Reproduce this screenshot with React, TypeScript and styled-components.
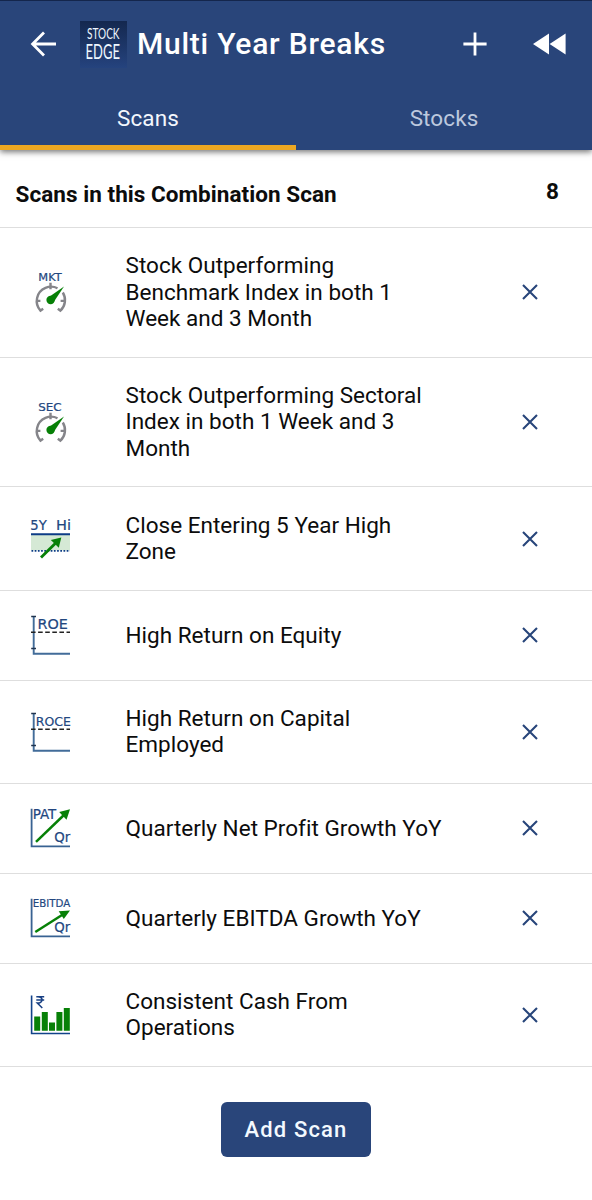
import React from "react";
import styled, { createGlobalStyle } from "styled-components";

const Global = createGlobalStyle`
  * { box-sizing: border-box; }
  body { margin: 0; background: #fff; font-family: Roboto, "Liberation Sans", sans-serif; color: #0c0c0c; }
  svg { display: block; }
`;

const NAVY = "#29457a";
const INK = "#23477f";
const GREEN = "#078007";

const Screen = styled.main`
  width: 592px;
  min-height: 1200px;
  background: #fff;
`;

const Header = styled.header`
  height: 150px;
  background: ${NAVY};
  border-top: 1px solid #14264c;
  box-shadow: 0 2px 6px rgba(0, 0, 0, 0.55);
  color: #fff;
`;

const Toolbar = styled.div`
  height: 85px;
  display: flex;
  align-items: center;
  padding: 0 26px 0 30px;
`;

const IconButton = styled.button<{ $gap?: number }>`
  border: 0;
  padding: 0;
  margin: 0 0 0 ${(p) => p.$gap ?? 0}px;
  background: none;
  color: inherit;
`;

const Logo = styled.div`
  width: 47px;
  height: 47px;
  margin: 2px 10px 0 23px;
  background: linear-gradient(#14284f, #25437e);
`;

const Title = styled.h1`
  flex: 1;
  margin: 0;
  font-size: 30px;
  font-weight: 500;
  letter-spacing: 0.76px;
  white-space: nowrap;
`;

const Tabs = styled.nav`
  display: grid;
  grid-template-columns: 1fr 1fr;
  height: 64px;
`;

const Tab = styled.button<{ $active?: boolean }>`
  border: 0;
  border-bottom: 5px solid ${(p) => (p.$active ? "#eca722" : "transparent")};
  padding: 4px 0 0;
  background: none;
  font: 400 22.5px Roboto, sans-serif;
  letter-spacing: 0.1px;
  color: ${(p) => (p.$active ? "#f3f7fd" : "#bdc9de")};
`;

const SectionHead = styled.div`
  display: flex;
  justify-content: space-between;
  height: 77.9px;
  padding: 31px 33px 0 15.5px;
  border-bottom: 1.3px solid #dedede;
  font-size: 22.5px;
  font-weight: 700;
  letter-spacing: 0.05px;
  line-height: 26px;
`;

const Count = styled.span`
  margin-top: -3px;
`;

const List = styled.ul`
  list-style: none;
  margin: 0;
  padding: 0;
`;

const Row = styled.li<{ $lines: number }>`
  display: grid;
  grid-template-columns: 40px 1fr 18px;
  align-items: center;
  height: ${(p) => (p.$lines === 3 ? 129.8 : p.$lines === 2 ? 103.4 : 89.8)}px;
  padding: 0 53px 0 30px;
  border-bottom: 1.3px solid #dedede;
`;

const Label = styled.div`
  padding: 0 0 1px 55.5px;
  font-size: 22.5px;
  line-height: 26.3px;
  letter-spacing: 0.02px;
  white-space: pre-line;
`;

const Footer = styled.footer`
  display: flex;
  justify-content: center;
  padding-top: 35px;
`;

const AddButton = styled.button`
  width: 150px;
  height: 55px;
  border: 0;
  border-radius: 6px;
  background: ${NAVY};
  color: #f3f9ff;
  font: 500 22px Roboto, sans-serif;
  letter-spacing: 1.15px;
`;

type WordProps = { x: number; y: number; w: number; size: number; children: string };
const Word = ({ x, y, w, size, children }: WordProps) => (
  <text x={x} y={y} textLength={w} lengthAdjust="spacingAndGlyphs" fontFamily="DejaVu Sans, sans-serif" fontSize={size} fill={INK} stroke={INK} strokeWidth="0.2">
    {children}
  </text>
);

const Glyph = ({ children }: { children: React.ReactNode }) => (
  <svg width="40" height="40" viewBox="0 0 40 40" overflow="visible" fill="none">
    {children}
  </svg>
);

const Gauge = ({ label }: { label: string }) => (
  <Glyph>
    <Word x={8.3} y={8.8} w={23.4} size={10.2}>{label}</Word>
    <g stroke="#85858a" strokeWidth="2.4">
      <path d="M13.2 36.8 L10.5 38.6 A14.2 14.2 0 0 1 15.5 15.9 A14.2 14.2 0 0 1 27.5 16.2 M32.8 20.5 A14.2 14.2 0 0 1 30.4 38.6 L27.8 36.8" />
      <path d="M20.5 10.8V17.2M6.2 28.9H10.4M30.6 28.9H35" />
    </g>
    <circle cx="20.6" cy="28" r="4.2" fill={GREEN} />
    <path d="M18.2 25.6 L34 14.6 L23.4 30.5Z" fill={GREEN} />
  </Glyph>
);

const FiveYearHigh = () => (
  <Glyph>
    <rect x="1" y="16" width="39" height="15.5" fill="#d5e9d5" />
    <Word x={0.3} y={10.6} w={16.5} size={14}>5Y</Word>
    <Word x={26.1} y={10.6} w={15} size={14}>Hi</Word>
    <path d="M1 15.2H40" stroke="#0d3c86" strokeWidth="2" />
    <path d="M1.5 31.9H40" stroke="#0d3c86" strokeWidth="1.9" strokeDasharray="1.7 1.5" />
    <path d="M11 38.5L27 22.8" stroke={GREEN} strokeWidth="2.8" />
    <path d="M31.3 18.4L28.8 28.8L20.8 20.9Z" fill={GREEN} />
  </Glyph>
);

const ReturnChart = ({ label, x, w, size }: { label: string; x: number; w: number; size: number }) => (
  <Glyph>
    <path d="M3.7 1.3V38.7H40" stroke="#426c99" strokeWidth="1.9" />
    <path d="M1.2 1.6H6M1.2 33.6H6" stroke="#20344f" strokeWidth="1.5" />
    <path d="M1 17.3H40" stroke="#222" strokeWidth="1.4" strokeDasharray="4.6 2.5" />
    <Word x={x} y={13.8} w={w} size={size}>{label}</Word>
  </Glyph>
);

const GrowthChart = ({ label, w, size, steep }: { label: string; w: number; size: number; steep?: boolean }) => (
  <Glyph>
    <path d="M1.6 0.7V38.3H40" stroke="#386292" strokeWidth="1.8" />
    <path d={steep ? "M6 33.8L35 6" : "M5.3 34L34 15.8"} stroke={GREEN} strokeWidth="2.5" />
    <path d={steep ? "M40 1.2L36.5 11.7L29.2 4Z" : "M40 12.4L33.8 21L28.7 13.2Z"} fill={GREEN} />
    <Word x={2.7} y={steep ? 10.7 : 8.9} w={w} size={size}>{label}</Word>
    <Word x={24.2} y={33.8} w={16} size={13.6}>Qr</Word>
  </Glyph>
);

const CashBars = () => (
  <Glyph>
    <path d="M1.6 0.5V38.5H40" stroke="#12438a" strokeWidth="1.6" />
    <path d="M6.3 1.7H14.2M6.3 5H14.2M7.2 1.8C13.8 1.3 13.7 8.2 7.3 8.1L12.3 13" stroke="#173f83" strokeWidth="1.5" />
    <path d="M4.2 21.5h6v14.2h-6zM11.8 17h6v18.7h-6zM19 27.5h6v8.2h-6zM26.4 17h6v18.7h-6zM33.8 13h6v22.7h-6z" fill={GREEN} />
  </Glyph>
);

const CloseIcon = () => (
  <svg width="18" height="18" viewBox="0 0 18 18">
    <path d="M2 2L16 16M16 2L2 16" stroke="#27457a" strokeWidth="2.1" />
  </svg>
);

const scans = [
  { lines: 3, text: "Stock Outperforming\nBenchmark Index in both 1\nWeek and 3 Month", icon: <Gauge label="MKT" /> },
  { lines: 3, text: "Stock Outperforming Sectoral\nIndex in both 1 Week and 3\nMonth", icon: <Gauge label="SEC" /> },
  { lines: 2, text: "Close Entering 5 Year High\nZone", icon: <FiveYearHigh /> },
  { lines: 1, text: "High Return on Equity", icon: <ReturnChart label="ROE" x={7.4} w={30.4} size={13.8} /> },
  { lines: 2, text: "High Return on Capital\nEmployed", icon: <ReturnChart label="ROCE" x={5.8} w={35} size={12.4} /> },
  { lines: 1, text: "Quarterly Net Profit Growth YoY", icon: <GrowthChart label="PAT" w={23.6} size={13.6} steep /> },
  { lines: 1, text: "Quarterly EBITDA Growth YoY", icon: <GrowthChart label="EBITDA" w={37.5} size={10.6} /> },
  { lines: 2, text: "Consistent Cash From\nOperations", icon: <CashBars /> },
];

export default function App() {
  return (
    <Screen>
      <Global />
      <Header>
        <Toolbar>
          <IconButton aria-label="Back">
            <svg width="27" height="26" viewBox="0 0 27 26" fill="none" stroke="#fff" strokeWidth="2.8">
              <path d="M26 13H2.6M14 1.6L2.6 13L14 24.4" />
            </svg>
          </IconButton>
          <Logo>
            <svg width="47" height="47" viewBox="0 0 47 47" fill="#eef7ff" fontFamily="Lato, sans-serif">
              <text transform="translate(7 18) scale(0.65 1)" fontSize="15.5">STOCK</text>
              <text transform="translate(5.6 37.7) scale(0.59 1)" fontSize="22">EDGE</text>
            </svg>
          </Logo>
          <Title>Multi Year Breaks</Title>
          <IconButton aria-label="Add">
            <svg width="24" height="24" viewBox="0 0 24 24" stroke="#fff" strokeWidth="2.8">
              <path d="M12 0.4V23.6M0.4 12H23.6" />
            </svg>
          </IconButton>
          <IconButton aria-label="Rewind" $gap={46}>
            <svg width="33" height="22" viewBox="0 0 33 22" fill="#fff">
              <path d="M16 0.6V21.4L0 11ZM32.6 0.6V21.4L16.6 11Z" />
            </svg>
          </IconButton>
        </Toolbar>
        <Tabs>
          <Tab $active>Scans</Tab>
          <Tab>Stocks</Tab>
        </Tabs>
      </Header>
      <SectionHead>
        <span>Scans in this Combination Scan</span>
        <Count>8</Count>
      </SectionHead>
      <List>
        {scans.map((s) => (
          <Row key={s.text} $lines={s.lines}>
            {s.icon}
            <Label>{s.text}</Label>
            <CloseIcon />
          </Row>
        ))}
      </List>
      <Footer>
        <AddButton>Add Scan</AddButton>
      </Footer>
    </Screen>
  );
}
